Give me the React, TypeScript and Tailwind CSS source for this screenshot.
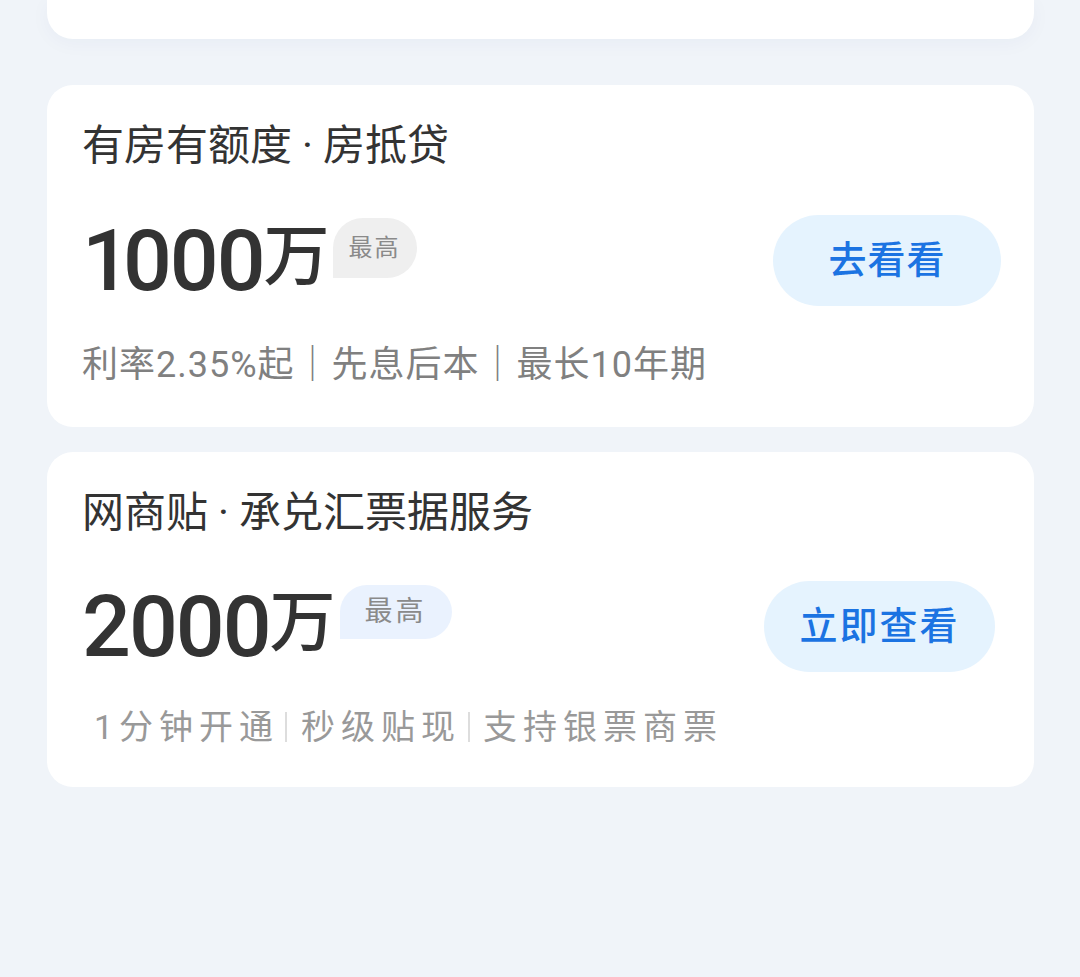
import React from 'react';

const font = "font-['Roboto','Noto_Sans_CJK_SC',sans-serif]";

const Badge = ({ text, className }: { text: string; className: string }) => (
    <div className={`flex items-center justify-center rounded-[30px] rounded-bl-none text-[#8a8a8a] ${className}`}>
        {text}
    </div>
);

const Dot = () => <span className="mx-[10px]">·</span>;

const Amount = ({ lead, rest }: { lead: string; rest: string }) => (
    <div className="flex items-start font-medium leading-none text-[#333333]">
        <span className="text-[86px] tracking-[-2px]">
            <span className={lead === '1' ? 'tracking-[-8px]' : ''}>{lead}</span>
            {rest}
        </span>
        <span className="mt-[6px] text-[66px]">万</span>
    </div>
);

const App = () => {
    return (
        <div className={`min-h-[977px] bg-[#f0f4f9] px-[47px] pr-[46px] ${font}`}>
            {/* previous card, only its bottom edge is visible */}
            <div className="h-[39px] rounded-b-[26px] bg-white shadow-[0_4px_20px_rgba(30,60,120,0.04)]"></div>

            {/* 房抵贷 */}
            <div className="mt-[46px] h-[342px] rounded-[26px] bg-white pl-[35px] pr-[33px] pt-[40px]">
                <div className="text-[42px] leading-none text-[#333333]">
                    有房有额度<Dot />房抵贷
                </div>
                <div className="mt-[48px] flex items-center justify-between">
                    <div className="flex items-start">
                        <Amount lead="1" rest="000" />
                        <Badge text="最高" className="ml-[3px] h-[60px] w-[84px] bg-[#efefef] text-[24px] tracking-[2px]" />
                    </div>
                    <button className="flex h-[91px] w-[228px] items-center justify-center rounded-full bg-[#e5f3fe] text-[38px] font-medium tracking-[1px] text-[#1b73e2]">
                        去看看
                    </button>
                </div>
                <div className="mt-[41px] text-[36px] leading-none tracking-[1px] text-[#808080]">
                    利率2.35%起｜先息后本｜最长10年期
                </div>
            </div>

            {/* 网商贴 */}
            <div className="mt-[25px] h-[335px] rounded-[26px] bg-white pl-[35px] pr-[39px] pt-[40px]">
                <div className="text-[42px] leading-none text-[#333333]">
                    网商贴<Dot />承兑汇票据服务
                </div>
                <div className="mt-[47px] flex items-center justify-between">
                    <div className="flex items-start">
                        <Amount lead="2" rest="000" />
                        <Badge text="最高" className="ml-[4px] mt-[1px] h-[54px] w-[112px] bg-[#eaf2fe] text-[28px] tracking-[3px]" />
                    </div>
                    <button className="flex h-[91px] w-[231px] items-center justify-center rounded-full bg-[#e5f3fe] text-[38px] font-medium tracking-[2px] text-[#1b73e2]">
                        立即查看
                    </button>
                </div>
                <div className="ml-[12px] mt-[38px] flex items-center text-[34px] leading-none tracking-[6px] text-[#999999]">
                    <span>1分钟开通</span>
                    <span className="ml-[6px] mr-[14px] h-[30px] w-[2px] bg-[#dddddd]"></span>
                    <span>秒级贴现</span>
                    <span className="ml-[7px] mr-[13px] h-[30px] w-[2px] bg-[#dddddd]"></span>
                    <span>支持银票商票</span>
                </div>
            </div>
        </div>
    );
};

export default App;
